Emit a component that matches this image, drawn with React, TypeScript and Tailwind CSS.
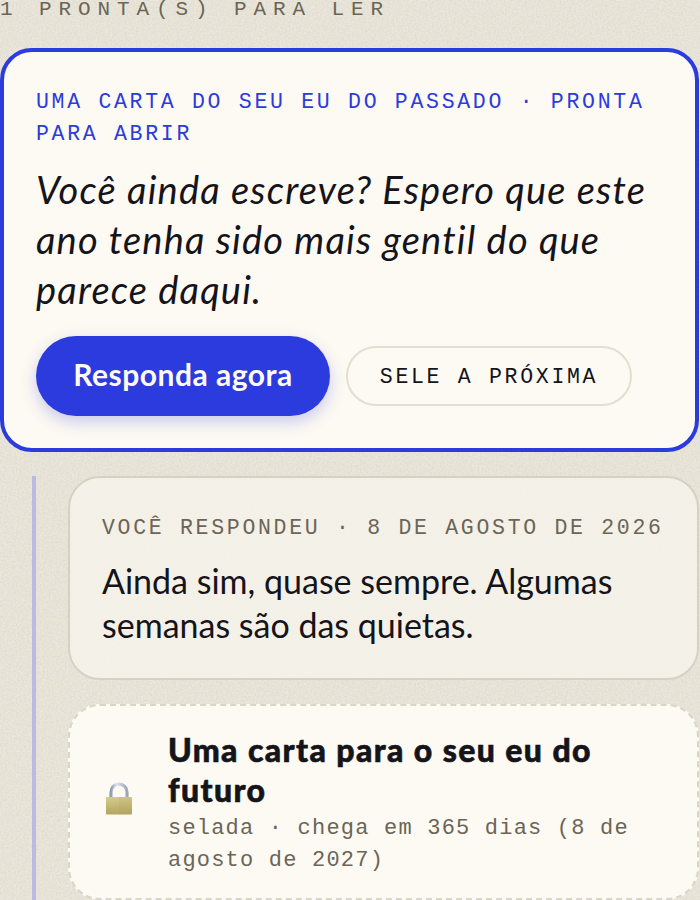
const sans = "font-['Lato','Noto_Sans',sans-serif]";
const mono = "font-['Liberation_Mono','Courier_New',monospace]";

function PaperGrain() {
  return (
    <svg className="absolute inset-0 h-full w-full" aria-hidden="true">
      <filter id="grain">
        <feTurbulence type="fractalNoise" baseFrequency="0.55" numOctaves="3" seed="4" />
        <feColorMatrix values="0 0 0 0 0.35  0 0 0 0 0.32  0 0 0 0 0.25  0 0 0 0.55 -0.12" />
      </filter>
      <rect width="100%" height="100%" filter="url(#grain)" opacity="0.45" />
    </svg>
  );
}

function LockIcon() {
  return (
    <svg width="28" height="34" viewBox="0 0 28 34" className="mb-[10px] shrink-0" aria-hidden="true">
      <defs>
        <linearGradient id="shackle" x1="0" y1="0" x2="1" y2="0">
          <stop offset="0" stopColor="#8d9bb0" />
          <stop offset="0.35" stopColor="#dfe4ec" />
          <stop offset="1" stopColor="#9aa6b8" />
        </linearGradient>
        <linearGradient id="lockBody" x1="0" y1="0" x2="0" y2="1">
          <stop offset="0" stopColor="#d6cb8c" />
          <stop offset="0.55" stopColor="#c3b673" />
          <stop offset="1" stopColor="#b3a662" />
        </linearGradient>
      </defs>
      <path d="M6 16V10.500C6 5.500 9.500 2.200 14 2.200S22 5.500 22 10.500V16" fill="none" stroke="url(#shackle)" strokeWidth="3.200" />
      <rect x="1" y="15" width="26" height="17.500" rx="1" fill="url(#lockBody)" />
      <rect x="14" y="15" width="13" height="17.500" fill="#a89a58" opacity="0.15" />
    </svg>
  );
}

export default function App() {
  return (
    <div className="relative h-[900px] w-[700px] overflow-hidden bg-[#ece8dd]">
      <PaperGrain />
      <div className="relative">
        <div className={`${mono} -mt-[4px] h-[52px] text-[21px] leading-[28px] tracking-[6.900px] text-[#6b6557]`}>
          1 PRONTA(S) PARA LER
        </div>

        <section className="mr-px flex h-[404px] flex-col rounded-[32px] border-4 border-[#2b3bdd] bg-[#fdfaf3] px-8 pt-[34px]">
          <p className={`${mono} text-[21.500px] leading-[32px] tracking-[2.700px] text-[#2b3bdd]`}>
            UMA CARTA DO SEU EU DO PASSADO · PRONTA PARA ABRIR
          </p>
          <h2 className={`${sans} mt-[14px] text-[38px] leading-[50px] font-normal italic tracking-[1.200px] text-[#14141a]`}>
            Você ainda escreve? Espero que este ano tenha sido mais gentil do que parece daqui.
          </h2>
          <div className="mt-[22px] flex items-center gap-4">
            <button className={`${sans} h-20 w-[294px] rounded-[40px] bg-[#2b3bdd] pb-[3px] text-[30px] font-bold tracking-[0.500px] text-[#fdfaf3] shadow-[0_6px_16px_rgba(43,59,221,0.25)]`}>
              Responda agora
            </button>
            <button className={`${mono} h-[60px] w-[286px] rounded-[30px] border-2 border-[#e3dfd0] pt-[3px] text-[21.500px] tracking-[2.700px] text-[#14141a]`}>
              SELE A PRÓXIMA
            </button>
          </div>
        </section>

        <div className="mt-6 ml-8 mr-px flex flex-col gap-6 border-l-4 border-[#b9bbe3] pb-16 pl-8">
          <section className="h-[204px] rounded-[32px] border-2 border-[#d6d2c3] bg-[#f5f2e9]/90 px-8 pt-[26px]">
            <p className={`${mono} whitespace-nowrap text-[21.500px] leading-[48px] tracking-[2.700px] text-[#6b6557]`}>
              VOCÊ RESPONDEU · 8 DE AGOSTO DE 2026
            </p>
            <p className={`${sans} mt-[7px] text-[34px] leading-[44px] text-[#14141a]`}>
              Ainda sim, quase sempre. Algumas semanas são das quietas.
            </p>
          </section>

          <section className="flex items-center gap-[35px] rounded-[32px] border-2 border-dashed border-[#d9d5c7] bg-[#fdfaf3] pt-6 pb-[21px] pl-[35px] pr-8">
            <LockIcon />
            <div>
              <h3 className={`${sans} text-[32px] leading-[40px] font-black tracking-[1.400px] text-[#14141a] [-webkit-text-stroke:0.6px_#14141a]`}>
                Uma carta para o seu eu do futuro
              </h3>
              <p className={`${mono} mt-[3px] text-[22px] leading-[32px] tracking-[1.200px] text-[#6b6557]`}>
                selada · chega em 365 dias (8 de agosto de 2027)
              </p>
            </div>
          </section>
        </div>
      </div>
    </div>
  );
}
